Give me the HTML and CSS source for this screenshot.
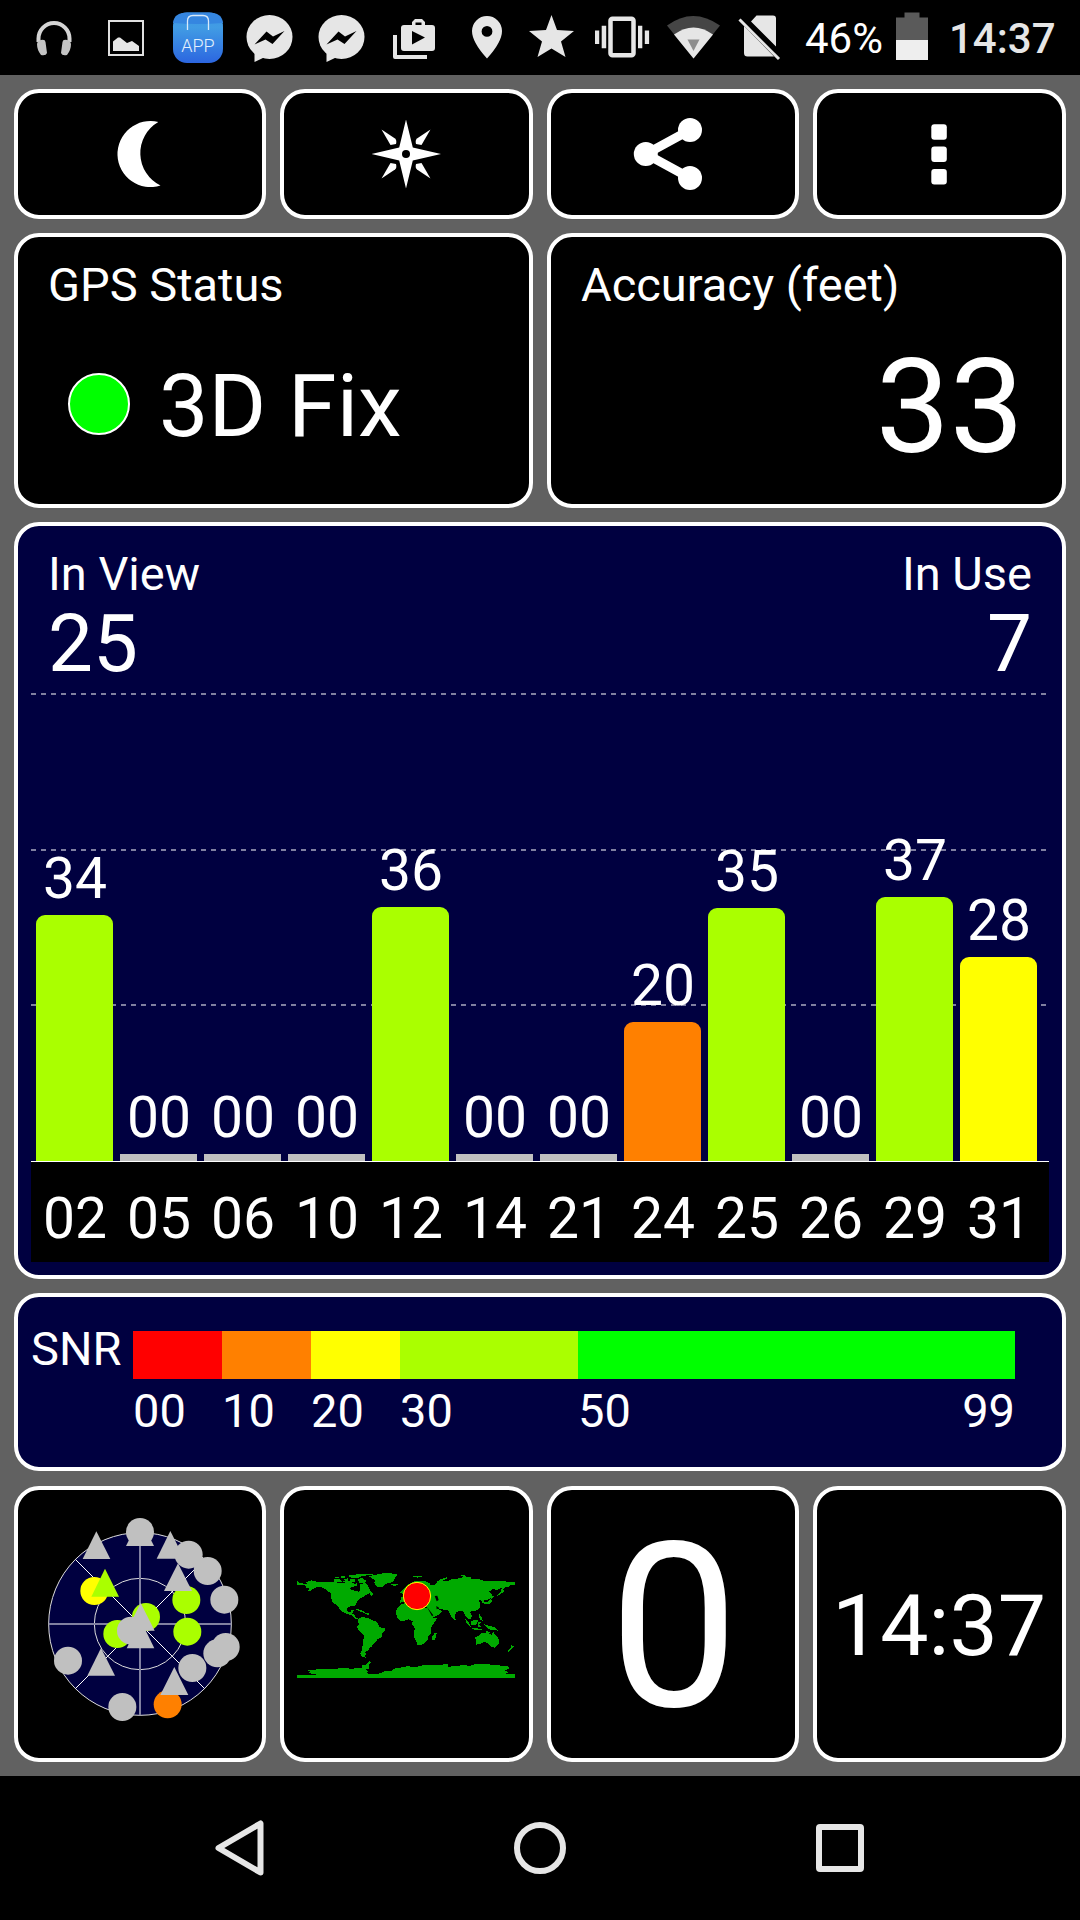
FILE: index.html
```html
<!DOCTYPE html>
<html lang="en">
<head>
<meta charset="UTF-8">
<title>GPS Status</title>
<link rel="stylesheet" href="styles.css">
</head>
<body>

<!-- status bar -->
<div class="status-bar">
  <svg width="90" height="75" viewBox="0 0 90 75">
    <path d="M38.500 42V38.500A15.500 15.500 0 0 1 69.500 38.500V42" fill="none" stroke="#d4d4d4" stroke-width="4"/>
    <path d="M38 41Q45 38 45.500 42L47 53Q46 56 41 55Q37 50 37 44ZM70 41Q63 38 62.500 42L61 53Q62 56 67 55Q71 50 71 44Z" fill="#c4c4c4"/>
  </svg>
  <svg width="68" height="75" viewBox="90 0 68 75">
    <rect x="109" y="21" width="34" height="34" fill="none" stroke="#e0e0e0" stroke-width="2"/>
    <path d="M113 51V41.500L118 37.500H120L127 43L132 41L139 46V51Z" fill="#e6e6e6"/>
  </svg>
  <svg width="77" height="75" viewBox="158 0 77 75">
    <defs>
      <linearGradient id="app" x1="0" y1="0" x2="0" y2="1">
        <stop offset="0" stop-color="#3f98e6"/><stop offset=".3" stop-color="#419ce4"/><stop offset="1" stop-color="#2c66e0"/>
      </linearGradient>
    </defs>
    <rect x="173" y="12.500" width="50" height="50.500" rx="14" fill="url(#app)"/>
    <path d="M173 23Q174 12.500 187 12.500H209Q222 12.500 223 23Q198 25 173 23Z" fill="#3586e0"/>
    <path d="M187.500 30V21Q187.500 15.500 193 15.500H203Q208.500 15.500 208.500 21V30" fill="none" stroke="#d8eafa" stroke-width="1.300"/>
    <text class="app-label" x="198" y="52" text-anchor="middle">APP</text>
  </svg>
  <svg width="70" height="75" viewBox="235 0 70 75">
    <ellipse cx="269.500" cy="37" rx="23" ry="22" fill="#e6e6e6"/>
    <path d="M254.500 48V62L265 57Z" fill="#e6e6e6"/>
    <path d="M254.500 44.500L266.500 31.500L273 36.500L284.500 31L272.500 44L265.500 39.500Z" fill="#000"/>
  </svg>
  <svg width="73" height="75" viewBox="233 0 73 75">
    <ellipse cx="269.500" cy="37" rx="23" ry="22" fill="#e6e6e6"/>
    <path d="M254.500 48V62L265 57Z" fill="#e6e6e6"/>
    <path d="M254.500 44.500L266.500 31.500L273 36.500L284.500 31L272.500 44L265.500 39.500Z" fill="#000"/>
  </svg>
  <svg width="75" height="75" viewBox="378 0 75 75">
    <path d="M395 35V57H427" fill="none" stroke="#e6e6e6" stroke-width="4" stroke-linejoin="round"/>
    <path fill-rule="evenodd" d="M404 25H412V22L415 19H422L425 22V25H432Q435 25 435 28V48Q435 51 432 51H404Q401 51 401 48V28Q401 25 404 25ZM415.500 25H421.500V22.500H415.500ZM412 31V44.500L425 37.500Z" fill="#e6e6e6"/>
  </svg>
  <svg width="62" height="75" viewBox="453 0 62 75">
    <path fill-rule="evenodd" d="M487 16A15 15 0 0 0 472 31Q472 42 487 58.500Q502 42 502 31A15 15 0 0 0 487 16ZM487 26A5.400 5.400 0 1 1 487 36.800A5.400 5.400 0 1 1 487 26Z" fill="#e6e6e6"/>
  </svg>
  <svg width="69" height="75" viewBox="515 0 69 75">
    <path d="M551.500 15L557 30L574 31L561 41.500L565.500 57L551.500 48.500L537.500 57L542 41.500L529 31L546 30Z" fill="#e6e6e6"/>
  </svg>
  <svg width="74" height="75" viewBox="584 0 74 75">
    <rect x="610.500" y="18.800" width="23" height="36.500" rx="2" fill="none" stroke="#e6e6e6" stroke-width="4.500"/>
    <path d="M595 30.500h4.200v13.500H595zM601.700 25.700h4.500v22.600h-4.500zM638 25.700h4.300v22.600H638zM644.800 30.500h4.300v13.500h-4.300z" fill="#e6e6e6"/>
  </svg>
  <svg width="71" height="75" viewBox="658 0 71 75">
    <path d="M667 25.500Q693 6.500 720 25.500L693.500 58.500Z" fill="#454545"/>
    <path d="M674 34.500Q693.500 20.500 713 34.500L693.500 58.500Z" fill="#e6e6e6"/>
    <path d="M687.500 39.500H699.500L693.500 51Z" fill="#8d8d8d"/>
  </svg>
  <svg width="71" height="75" viewBox="729 0 71 75">
    <path d="M744 26L774 56.500H747.500Q744 56.500 744 53ZM751 21.500L756.500 15.500H773Q776 15.500 776 18.500V46.500Z" fill="#e6e6e6"/>
    <path d="M739.500 19.500L779 59" stroke="#e6e6e6" stroke-width="3"/>
  </svg>
  <span class="percent">46%</span>
  <svg class="battery" width="32" height="75" viewBox="896 0 32 75">
    <path d="M896 40V17.500H904.500V12.500H919.500V17.500H928V40Z" fill="#5a5a5a"/>
    <rect x="896" y="40" width="32" height="20" fill="#eee"/>
  </svg>
  <span class="clock">14:37</span>
</div>

<div class="app">

  <!-- toolbar -->
  <div class="row toolbar">
    <div class="card">
      <svg viewBox="18 93 244 122">
        <path d="M158.300 122A33 33 0 1 0 160.500 185.500A36 36 0 0 1 158.300 122Z" fill="#fff"/>
      </svg>
    </div>
    <div class="card">
      <svg viewBox="284 93 245 122">
        <g fill="#fff">
          <path d="M406 119.500L412.800 147.500L441 154L412.800 160.500L406 188.500L399.200 160.500L371.500 154L399.200 147.500Z"/>
          <path d="M381.500 129.500L395 138.500Q397 140 396 144L390.500 145Z"/>
          <path d="M381.500 129.500L395 138.500Q397 140 396 144L390.500 145Z" transform="matrix(-1 0 0 1 812 0)"/>
          <path d="M381.500 129.500L395 138.500Q397 140 396 144L390.500 145Z" transform="matrix(1 0 0 -1 0 308)"/>
          <path d="M381.500 129.500L395 138.500Q397 140 396 144L390.500 145Z" transform="matrix(-1 0 0 -1 812 308)"/>
        </g>
        <circle cx="406" cy="154" r="4" fill="#000"/>
      </svg>
    </div>
    <div class="card">
      <svg viewBox="551 93 244 122">
        <path d="M690 130L646 154L690 178" fill="none" stroke="#fff" stroke-width="9"/>
        <g fill="#fff">
          <circle cx="690" cy="130" r="12"/><circle cx="645.800" cy="154" r="12"/><circle cx="690" cy="178" r="12"/>
        </g>
      </svg>
    </div>
    <div class="card">
      <svg viewBox="817 93 245 122">
        <g fill="#fff">
          <rect x="931.300" y="124.300" width="15.500" height="15.500" rx="3"/>
          <rect x="931.300" y="146.600" width="15.500" height="15.500" rx="3"/>
          <rect x="931.300" y="168.900" width="15.500" height="15.500" rx="3"/>
        </g>
      </svg>
    </div>
  </div>

  <!-- fix + accuracy -->
  <div class="row info">
    <div class="card">
      <div class="title">GPS Status</div>
      <div class="fix"><span class="led"></span><span>3D Fix</span></div>
    </div>
    <div class="card">
      <div class="title">Accuracy (feet)</div>
      <div class="accuracy">33</div>
    </div>
  </div>

  <!-- satellites -->
  <div class="card blue sats">
    <div class="sats-head">
      <div><div class="title">In View</div><div class="count">25</div></div>
      <div class="right"><div class="title">In Use</div><div class="count">7</div></div>
    </div>
    <div class="plot">
      <div class="col"><span>34</span><div class="bar lime" style="height:246px"></div></div>
      <div class="col"><span>00</span><div class="bar none" style="height:7px"></div></div>
      <div class="col"><span>00</span><div class="bar none" style="height:7px"></div></div>
      <div class="col"><span>00</span><div class="bar none" style="height:7px"></div></div>
      <div class="col"><span>36</span><div class="bar lime" style="height:254px"></div></div>
      <div class="col"><span>00</span><div class="bar none" style="height:7px"></div></div>
      <div class="col"><span>00</span><div class="bar none" style="height:7px"></div></div>
      <div class="col"><span>20</span><div class="bar orange" style="height:139px"></div></div>
      <div class="col"><span>35</span><div class="bar lime" style="height:253px"></div></div>
      <div class="col"><span>00</span><div class="bar none" style="height:7px"></div></div>
      <div class="col"><span>37</span><div class="bar lime" style="height:264px"></div></div>
      <div class="col"><span>28</span><div class="bar yellow" style="height:204px"></div></div>
    </div>
    <div class="prn">
      <span>02</span><span>05</span><span>06</span><span>10</span><span>12</span><span>14</span>
      <span>21</span><span>24</span><span>25</span><span>26</span><span>29</span><span>31</span>
    </div>
  </div>

  <!-- SNR legend -->
  <div class="card blue snr">
    <div class="snr-label">SNR</div>
    <div class="scale">
      <div class="step"><i class="red"></i><span>00</span></div>
      <div class="step"><i class="orange"></i><span>10</span></div>
      <div class="step"><i class="yellow"></i><span>20</span></div>
      <div class="step"><i class="lime"></i><span>30</span></div>
      <div class="step"><i class="green"></i><span>50</span><span>99</span></div>
    </div>
  </div>

  <!-- bottom tiles -->
  <div class="row tiles">
    <div class="card">
      <svg viewBox="54 60 732 804">
        <circle cx="420" cy="462" r="274" fill="#000040" stroke="#ddd" stroke-width="3"/>
        <circle cx="420" cy="462" r="137" fill="none" stroke="#ddd" stroke-width="3"/>
        <path d="M226 268L614 656M226 656L614 268" stroke="#fff" stroke-width="3"/>
        <path d="M146 462H694M420 188V736" stroke="#8080a0" stroke-width="6"/>
        <g fill="#c0c0c0">
          <path d="M420 145L462 228H378Z"/>
          <circle cx="420" cy="186" r="42"/>
          <path d="M289 184L331 267H248Z"/>
          <path d="M511 183L553 266H470Z"/>
          <circle cx="566" cy="254" r="42"/>
          <circle cx="623" cy="303" r="42"/>
          <circle cx="673" cy="389" r="42"/>
          <circle cx="677" cy="531" r="42"/>
          <circle cx="652" cy="550" r="42"/>
          <circle cx="577" cy="594" r="42"/>
          <circle cx="204" cy="572" r="42"/>
          <circle cx="367" cy="711" r="42"/>
          <path d="M303 534L345 617H262Z"/>
        </g>
        <circle cx="283" cy="363" r="42" fill="#ff0"/>
        <path d="M315 296L357 380H274Z" fill="#af0"/>
        <g fill="#af0">
          <circle cx="559" cy="390" r="42"/>
          <circle cx="562" cy="485" r="42"/>
          <circle cx="438" cy="441" r="42"/>
          <circle cx="352" cy="492" r="42"/>
        </g>
        <circle cx="503" cy="703" r="42" fill="#ff8000"/>
        <g fill="#c0c0c0">
          <path d="M534 280L576 363H492Z"/>
          <path d="M523 591L565 675H481Z"/>
          <circle cx="393" cy="482" r="42"/>
          <path d="M422 399L464 482H380Z"/>
          <path d="M422 451L463 535H380Z"/>
        </g>
      </svg>
    </div>
    <div class="card">
      <svg viewBox="42 -150 735 804">
        <g fill="#0a0" shape-rendering="crispEdges">
          <path d="M81 120L86 128L96 130L108 134L112 131L106 126L115 124L125 121L140 125L185 126L205 128L245 127L255 132L262 128V138L248 140L240 145L246 150L262 154L266 158L270 148V132L284 132L290 142L298 150L301 158L288 165L270 176L262 184L256 196L250 198L236 200L230 206L232 214L240 217L244 211L252 211L247 221L255 225L256 232L266 236L256 237L244 226L232 222L216 214L207 204L195 192L185 183L183 160L172 152L160 143L145 141L134 143L123 152L112 154L118 146L108 143L108 137L90 135L81 134Z"/>
          <!-- arctic islands -->
          <path d="M181 122H193V118L208 117L218 125L200 126ZM190 114L205 110L208 115ZM214 108H226V113H214ZM222 118L235 114L233 124L225 124ZM232 107L262 103L300 101L312 103L290 106L272 110L262 115L245 113ZM240 118H256V125H240ZM262 117L278 114L290 124L285 128L294 137L300 150L311 165L304 167L296 157L280 156L282 145L274 138L278 130L268 128ZM218 124H240V127H218Z"/>
          <path d="M284 108L312 106L330 101L352 99L372 101L384 104L376 110L372 120L367 126L350 131L340 138L334 142H324L316 136L312 127L316 121L306 115L300 110ZM364 133L378 131L384 134L374 138L366 136Z"/>
          <path d="M254 205L272 210L282 215L274 216L262 211ZM278 216L296 220L300 226L286 222Z"/>
          <path d="M264 238L276 231L296 235L306 240L316 244L324 252L330 262L346 266L344 272L336 282L335 292L322 297L318 306L308 315L304 322L297 323L295 332L286 336L288 343L284 347L290 354L273 348L271 340L276 330L279 308L282 286L270 275L261 262L266 253Z"/>
          <path d="M390 188L393 172H400L404 164L390 158L400 148L410 136L432 124H466L480 130L479 136L494 134L500 128L504 122L516 119L530 112L524 119L512 124L535 123L545 118L560 117L574 113L590 110L604 113L603 117L630 118L640 122L690 124L708 122L710 127L735 125V134L722 136L714 142L706 142L700 146V156L690 164L678 170L684 162L694 154L695 143L682 149L668 148L656 155L666 162L664 172L652 180H642L644 190L636 190L634 180L627 179L630 192L631 202L624 210L612 214L606 213L601 218L606 230L600 238H594L590 230L586 228L582 218L576 212L566 214L558 218L554 228L558 240H552L545 232L540 222L536 212L520 209L503 204L509 210L516 212L512 220L494 230L486 232L478 215L470 200L440 190L405 185Z"/>
          <path d="M392 194L406 189L435 196L455 200L472 204L478 216L486 226L490 235L502 232L498 242L488 254L482 264L483 280L475 287L474 297L462 311L452 315H443L438 304L432 290V276L435 266L427 253L428 243L416 238L396 244L388 240L380 230L378 213L384 202ZM494 276L500 280L498 290L494 299H487L486 288L492 284Z"/>
          <path d="M432 107H455V110H445V114L438 110H430ZM504 124L510 118L530 112V116L516 120L512 125ZM572 106H584V109L600 112H582Z"/>
          <!-- east asia, oceania -->
          <path d="M666 166L673 171L664 176L665 184L659 191H643L641 187L654 185L660 180ZM691 158L702 149L703 153L692 161ZM627 220L631 226L637 236L638 243L630 238L626 230ZM583 232L596 246L604 262L590 250ZM602 244L618 238L624 242L618 256L604 254ZM624 244L634 248L626 252L632 260H624ZM604 263L626 266L640 270H618L606 267ZM640 252L650 256L664 258L678 264L684 272L670 270L655 268L650 263Z"/>
          <path d="M615 291L628 287L635 278L646 280L648 274L660 275L658 281L666 286L669 272L674 283L684 293L688 301L685 314L676 321V329L672 322L662 320L656 311L644 306L632 311L618 314V303ZM724 314L732 320L726 326L716 335L712 332L722 325Z"/>
          <path d="M81 405H132L142 402L124 401L114 398L122 396L114 391H132L140 388L160 386L190 387L224 383L240 386L266 385L278 382L274 377L290 373L300 363L303 368L298 374V386L288 388L294 396L286 399L305 403L330 400L342 394L364 392L376 385L396 382L412 379L440 381L458 376L505 375L534 372V381L560 377L580 376L600 377L622 371L656 372L662 375L700 377L718 380L716 387L705 391L716 399H702L712 402H735V414H81Z"/>
        </g>
        <path d="M494 168L502 167L506 180L500 184ZM499 198L508 204L500 208ZM471 201L490 226L486 229Z" fill="#000"/>
        <circle cx="441" cy="168" r="41" fill="#f00" stroke="#ff0" stroke-width="3"/>
      </svg>
    </div>
    <div class="card speed">0</div>
    <div class="card time">14:37</div>
  </div>
</div>

<!-- navigation bar -->
<div class="nav-bar">
  <svg width="60" height="60" viewBox="210 1818 60 60"><path d="M218.500 1848L260.500 1823.500V1872.500Z"/></svg>
  <svg width="60" height="60" viewBox="510 1818 60 60"><circle cx="540" cy="1848" r="23"/></svg>
  <svg width="60" height="60" viewBox="810 1818 60 60"><rect x="819" y="1827" width="42" height="42" rx="1"/></svg>
</div>

</body>
</html>
```
FILE: styles.css
```css
* {
  box-sizing: border-box;
}

body {
  margin: 0;
  width: 1080px;
  height: 1920px;
  background: #000;
  color: #fff;
  font-family: Roboto, "Liberation Sans", sans-serif;
}

svg {
  display: block;
}

/* status bar */
.status-bar {
  display: flex;
  align-items: center;
  height: 75px;
  font-size: 42px;
  line-height: 42px;
}

.status-bar svg {
  flex: none;
}

.app-label {
  font-size: 18px;
  font-weight: 300;
  fill: #e4f0fc;
}

.percent {
  width: 92px;
  padding: 3px 0 0 5px;
}

.battery {
  margin-left: 4px;
}

.clock {
  padding-top: 3px;
  margin-left: 21px;
  color: #e6e6e6;
  font-weight: 500;
}

/* main area */
.app {
  display: flex;
  flex-direction: column;
  gap: 14px;
  height: 1701px;
  padding: 14px;
  background: #616161;
}

.row {
  display: grid;
  grid-template-columns: 252px 253px 252px 253px;
  gap: 14px;
}

.card {
  border: 4px solid #fff;
  border-radius: 25px;
  background: #000;
  overflow: hidden;
}

.card > svg {
  width: 100%;
  height: 100%;
}

.blue {
  background: #000040;
}

.toolbar {
  height: 130px;
}

.info {
  grid-template-columns: 1fr 1fr;
  height: 275px;
}

.info .card {
  padding: 24px 38px 0 30px;
}

.title {
  font-size: 47px;
  line-height: 48px;
}

.fix {
  display: flex;
  align-items: center;
  gap: 29px;
  margin: 53px 0 0 20px;
  font-size: 88px;
  line-height: 88px;
}

.led {
  width: 62px;
  height: 62px;
  margin-bottom: 4px;
  border: 2px solid #fff;
  border-radius: 50%;
  background: #0f0;
}

.accuracy {
  margin-top: 32px;
  font-size: 132px;
  line-height: 132px;
  text-align: right;
}

/* satellites chart */
.sats {
  height: 757px;
  padding: 24px 13px 0 13px;
}

.sats-head {
  display: flex;
  justify-content: space-between;
  padding: 0 17px;
}

.right {
  text-align: right;
}

.count {
  margin-top: 6px;
  font-size: 80px;
  line-height: 81px;
}

.plot {
  --dash: linear-gradient(90deg, #8080a0 50%, transparent 50%);
  display: flex;
  align-items: flex-end;
  gap: 7px;
  height: 469px;
  margin-top: 8px;
  padding-left: 5px;
  border-bottom: 1px solid #fff;
  background-image: var(--dash), var(--dash), var(--dash);
  background-size: 10px 2px;
  background-position: 0 0, 0 156px, 0 311px;
  background-repeat: repeat-x;
}

.col {
  width: 77px;
  font-size: 57px;
  line-height: 57px;
  text-align: center;
}

.col span {
  display: block;
  margin-bottom: 8px;
  padding-left: 1px;
}

.bar {
  border-radius: 9px 9px 0 0;
}

.none {
  border-radius: 0;
  background: #c0c0c0;
}

.red { background: #f00; }
.orange { background: #ff8000; }
.yellow { background: #ff0; }
.lime { background: #af0; }
.green { background: #0f0; }

.prn {
  display: flex;
  gap: 7px;
  height: 100px;
  padding: 28px 0 0 5px;
  background: #000;
  font-size: 57px;
  line-height: 57px;
  text-align: center;
}

.prn span {
  width: 77px;
  padding-left: 1px;
}

/* SNR legend */
.snr {
  display: flex;
  height: 178px;
  padding-left: 13px;
  font-size: 47px;
  line-height: 48px;
}

.snr-label {
  width: 102px;
  padding-top: 28px;
}

.scale {
  display: grid;
  grid-template-columns: 89px 89px 89px 178px 437px;
  padding-top: 34px;
}

.step {
  display: flex;
  flex-wrap: wrap;
  justify-content: space-between;
  align-content: flex-start;
}

.step i {
  width: 100%;
  height: 48px;
  margin-bottom: 8px;
}

/* bottom tiles */
.tiles {
  height: 276px;
  margin-top: 1px;
}

.speed,
.time {
  display: flex;
  align-items: center;
  justify-content: center;
  line-height: 1;
}

.speed {
  padding: 6px 0 0 2px;
  font-size: 231px;
}

.time {
  padding: 3px 1px 0 0;
  font-size: 86px;
}

/* navigation bar */
.nav-bar {
  display: flex;
  justify-content: center;
  align-items: center;
  gap: 240px;
  height: 144px;
}

.nav-bar svg {
  fill: none;
  stroke: #e6e6e6;
  stroke-width: 6;
  stroke-linejoin: round;
}
```
